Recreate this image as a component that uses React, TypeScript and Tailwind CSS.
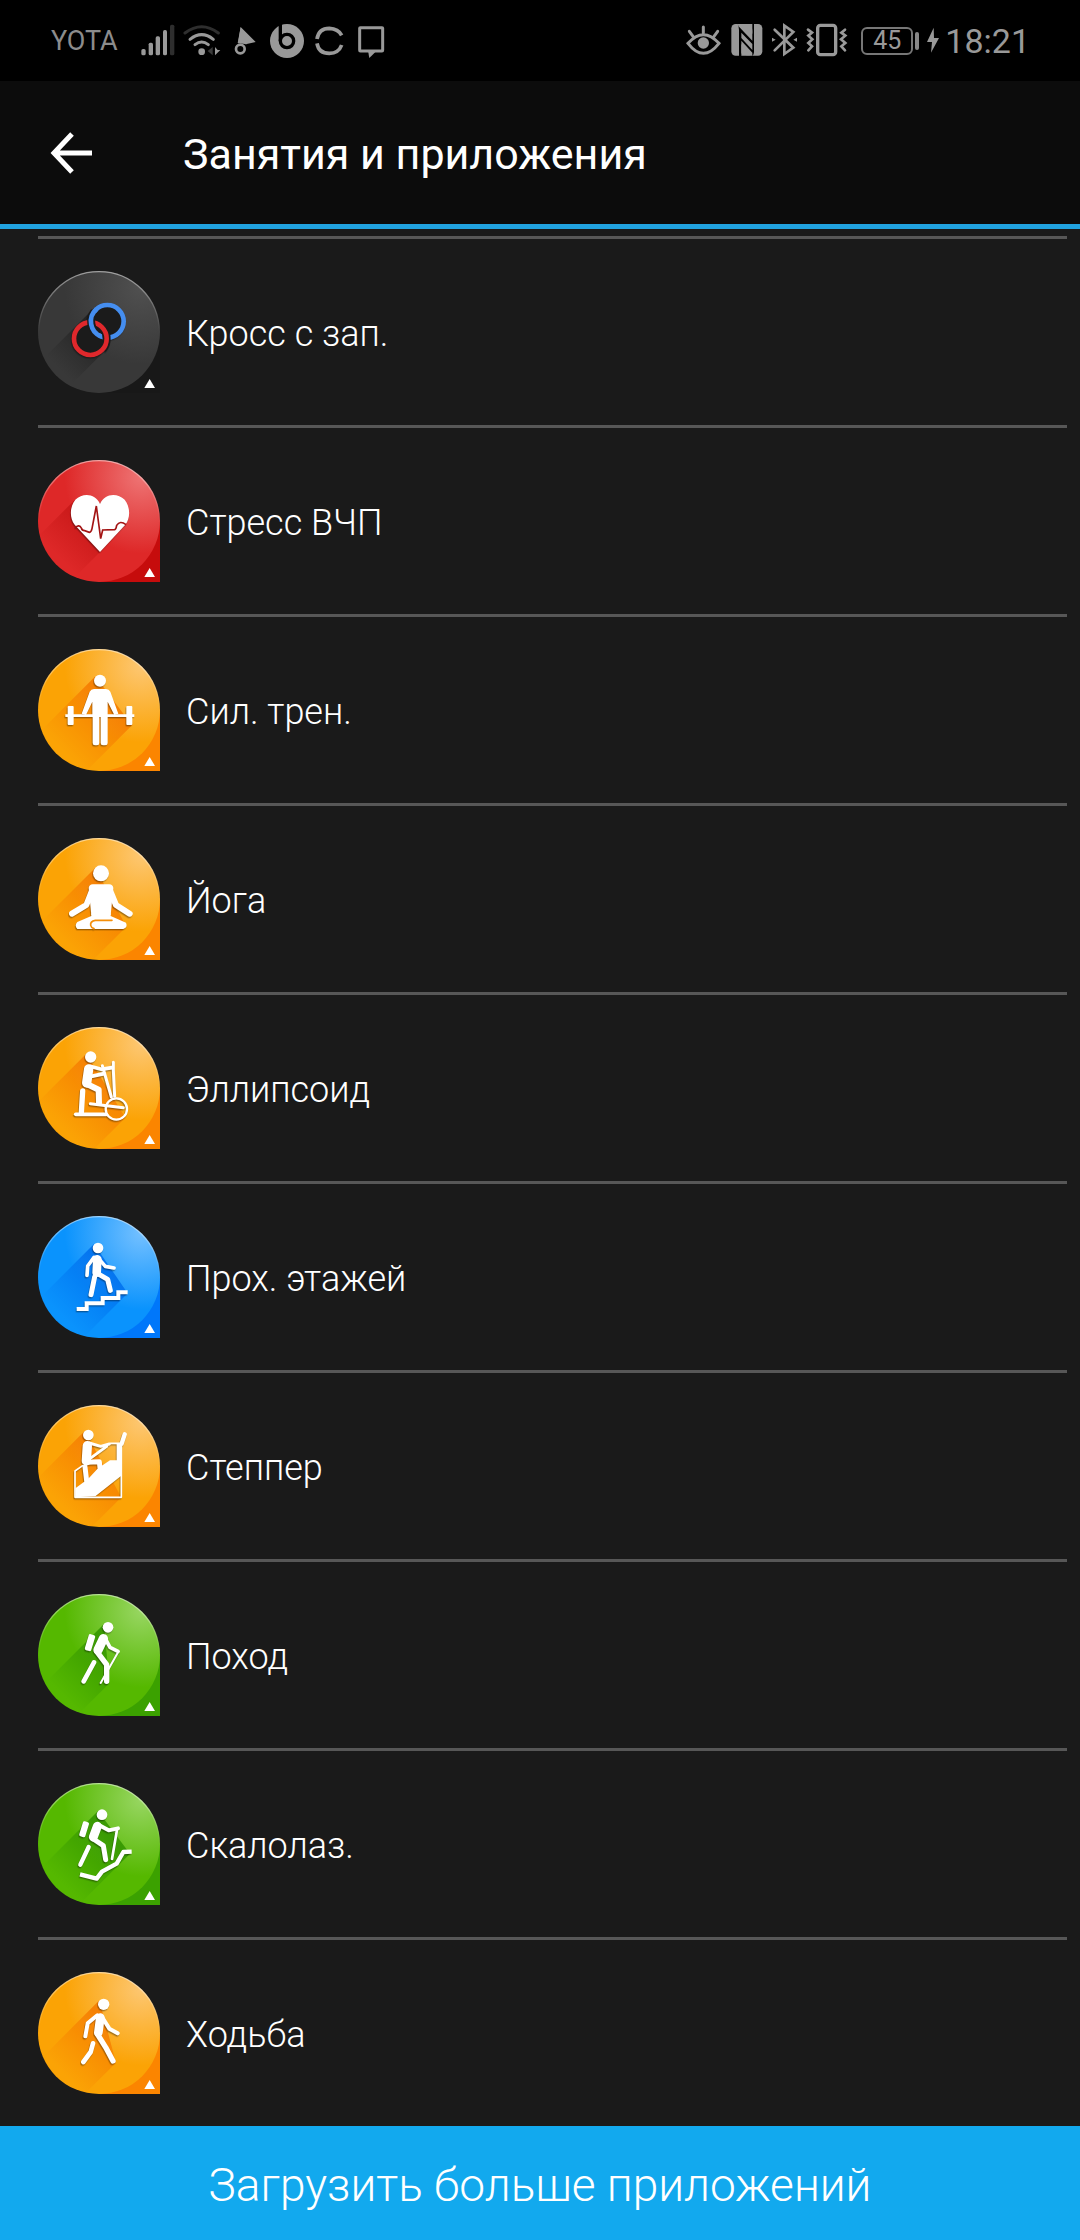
import type { ReactNode } from "react";

type Tone = { base: string; light: string; corner: string; shade: string };

const tones: Record<string, Tone> = {
  dark: { base: "#383838", light: "#505050", corner: "#181818", shade: "#1c1c1c" },
  red: { base: "#de2828", light: "#ee7474", corner: "#c60c0c", shade: "#bd1010" },
  orange: { base: "#fba305", light: "#fdc772", corner: "#fb8500", shade: "#f57c00" },
  blue: { base: "#0a93fd", light: "#74c0ff", corner: "#0077fa", shade: "#0070ee" },
  green: { base: "#55b800", light: "#98d662", corner: "#3ba100", shade: "#349600" },
};

type Activity = {
  id: string;
  name: string;
  tone: keyof typeof tones;
  // the two outer points of the glyph that the long shadow starts from
  shadow: [number, number, number, number];
  glyph: ReactNode;
};

const activities: Activity[] = [
  {
    id: "cross",
    name: "Кросс с зап.",
    tone: "dark",
    shadow: [168, 111, 197, 243],
    glyph: (
      <g fill="none">
        <circle cx="208" cy="151" r="49" fill="#1b1b1b" />
        <circle cx="157" cy="203" r="49" fill="#1b1b1b" />
        <circle cx="208" cy="151" r="49" stroke="#458ef0" strokeWidth="14" />
        <circle cx="157" cy="203" r="49" stroke="#1b1b1b" strokeWidth="24" strokeDasharray="64 244" transform="rotate(-35 157 203)" />
        <circle cx="157" cy="203" r="49" stroke="#e0282c" strokeWidth="14" />
        <path d="M169 122A49 49 0 0 0 180 191" stroke="#1b1b1b" strokeWidth="24" />
        <path d="M176 114A49 49 0 0 0 190 197" stroke="#458ef0" strokeWidth="14" />
      </g>
    ),
  },
  {
    id: "stress",
    name: "Стресс ВЧП",
    tone: "red",
    shadow: [110, 120, 186, 276],
    glyph: (
      <>
        <path d="M186 276L110 194C94 174 95 140 112 119C134 98 172 99 186 132C200 99 238 98 260 119C277 140 278 174 262 194Z" fill="#fff" />
        <path
          d="M112 202C120 196 126 196 130 204Q132 212 140 212L154 217Q160 216 162 206L175 138L188 236L194 210L230 209Q234 208 236 196Q246 180 264 194"
          fill="none"
          stroke="#a31414"
          strokeWidth="5"
        />
      </>
    ),
  },
  {
    id: "strength",
    name: "Сил. трен.",
    tone: "orange",
    shadow: [172, 82, 282, 229],
    glyph: (
      <g fill="#fff">
        <circle cx="186" cy="95" r="18" />
        <path d="M168 120H204Q213 120 217 128L241 194L229 198L209 158V202H163V158L144 198L131 194L155 128Q159 120 168 120Z" />
        <path d="M82 196H289V204H82Z" />
        <rect x="89" y="171" width="18" height="57" rx="3" />
        <rect x="265" y="171" width="18" height="57" rx="3" />
        <rect x="164" y="196" width="20" height="93" rx="7" />
        <rect x="188" y="196" width="21" height="93" rx="7" />
      </g>
    ),
  },
  {
    id: "yoga",
    name: "Йога",
    tone: "orange",
    shadow: [172, 89, 265, 266],
    glyph: (
      <g strokeLinecap="round" strokeLinejoin="round" fill="none">
        <circle cx="189" cy="106" r="24" fill="#fff" />
        <path d="M164 139H214Q224 139 226 150L218 232H160L152 150Q154 139 164 139Z" fill="#fff" />
        <path d="M165 150L145 201L102 227M213 150L234 201L275 227" stroke="#fff" strokeWidth="18" />
        <path d="M160 226V234L118 252Q108 262 118 273H256Q270 268 264 254L218 234V226Z" fill="#fff" />
        <path d="M222 247H172Q156 250 158 262Q160 270 168 272" stroke="#f58f0a" strokeWidth="5" />
      </g>
    ),
  },
  {
    id: "elliptical",
    name: "Эллипсоид",
    tone: "orange",
    shadow: [145, 80, 262, 272],
    glyph: (
      <g stroke="#fff" strokeLinecap="round" strokeLinejoin="round" fill="none">
        <circle cx="158" cy="90" r="17" fill="#fff" stroke="none" />
        <path d="M152 126L146 168" strokeWidth="28" />
        <path d="M156 118L190 127L222 122M160 148L198 140" strokeWidth="11" />
        <path d="M148 172L182 188L183 228" strokeWidth="18" />
        <path d="M134 192L130 258" strokeWidth="16" />
        <path d="M157 230L256 242M226 106V130L230 208M193 116L220 210" strokeWidth="9" />
        <path d="M113 262H205" strokeWidth="11" />
        <circle cx="235" cy="246" r="32" strokeWidth="7" />
      </g>
    ),
  },
  {
    id: "stairs",
    name: "Прох. этажей",
    tone: "blue",
    shadow: [168, 84, 269, 232],
    glyph: (
      <g stroke="#fff" strokeLinecap="round" strokeLinejoin="round" fill="none">
        <circle cx="180" cy="96" r="16" fill="#fff" stroke="none" />
        <path d="M178 130L176 170" strokeWidth="26" />
        <path d="M168 124L149 150L147 178M184 130L202 151L228 156" strokeWidth="11" />
        <path d="M170 182L159 236M178 172L209 190L217 223" strokeWidth="15" />
        <path d="M116 279H146V262H194V246H241V229H269" strokeWidth="12" strokeLinecap="butt" strokeLinejoin="miter" />
      </g>
    ),
  },
  {
    id: "stepper",
    name: "Степпер",
    tone: "orange",
    shadow: [140, 78, 250, 277],
    glyph: (
      <g stroke="#fff" strokeLinecap="round" strokeLinejoin="round" fill="none">
        <circle cx="151" cy="90" r="16" fill="#fff" stroke="none" />
        <path d="M148 122L145 168" strokeWidth="28" />
        <path d="M154 114L188 124L214 117M160 158L206 124" strokeWidth="9" />
        <path d="M146 172L184 170L186 188" strokeWidth="15" />
        <path d="M141 186L146 228" strokeWidth="15" />
        <path d="M134 182L111 198V277H250V115H218" strokeWidth="5" />
        <path d="M251 116L260 88" strokeWidth="13" />
        <path d="M112 250L150 222L180 190L216 166H236V115H250V212L172 274L112 277Z" fill="#fff" stroke="none" />
      </g>
    ),
  },
  {
    id: "hike",
    name: "Поход",
    tone: "green",
    shadow: [198, 90, 214, 268],
    glyph: (
      <g stroke="#fff" strokeLinecap="round" strokeLinejoin="round" fill="none">
        <circle cx="210" cy="100" r="16" fill="#fff" stroke="none" />
        <rect x="146" y="121" width="20" height="50" rx="5" fill="#fff" stroke="none" transform="rotate(17 156 146)" />
        <path d="M196 134L180 168" strokeWidth="28" />
        <path d="M204 138L216 160L240 172" strokeWidth="11" />
        <path d="M168 205L137 262" strokeWidth="14" />
        <path d="M176 172L206 212V262" strokeWidth="16" />
        <path d="M241 173L188 267" strokeWidth="6" />
      </g>
    ),
  },
  {
    id: "climb",
    name: "Скалолаз.",
    tone: "green",
    shadow: [180, 84, 276, 212],
    glyph: (
      <g stroke="#fff" strokeLinecap="round" strokeLinejoin="round" fill="none">
        <circle cx="192" cy="95" r="16" fill="#fff" stroke="none" />
        <rect x="129" y="115" width="19" height="47" rx="5" fill="#fff" stroke="none" transform="rotate(17 138 138)" />
        <path d="M178 130L166 162" strokeWidth="27" />
        <path d="M184 127L212 142L240 136" strokeWidth="12" />
        <path d="M152 192L127 245" strokeWidth="13" />
        <path d="M166 168L196 188L203 230" strokeWidth="15" />
        <path d="M237 140L222 228" strokeWidth="8" />
        <path d="M126 274L176 287L192 266L236 242L256 207L281 206" strokeWidth="13" strokeLinecap="butt" />
      </g>
    ),
  },
  {
    id: "walk",
    name: "Ходьба",
    tone: "orange",
    shadow: [184, 85, 234, 272],
    glyph: (
      <g stroke="#fff" strokeLinecap="round" strokeLinejoin="round" fill="none">
        <circle cx="197" cy="97" r="17" fill="#fff" stroke="none" />
        <path d="M187 137L181 182" strokeWidth="26" />
        <path d="M178 130L149 154L142 193M194 138L214 170L239 184" strokeWidth="12" />
        <path d="M165 214L158 240L136 270" strokeWidth="14" />
        <path d="M178 186L203 226L225 267" strokeWidth="16" />
      </g>
    ),
  },
];

const Badge = ({ activity }: { activity: Activity }) => {
  const { id, glyph, shadow } = activity;
  const tone = tones[activity.tone];
  const [ax, ay, bx, by] = shadow;
  return (
    <svg viewBox="0 0 366 366" className="size-[122px] shrink-0" aria-hidden="true">
      <defs>
        <radialGradient id={`${id}-fill`} gradientUnits="userSpaceOnUse" cx="310" cy="50" r="230">
          <stop offset="0" stopColor={tone.light} />
          <stop offset="1" stopColor={tone.base} />
        </radialGradient>
        <linearGradient id={`${id}-shade`} gradientUnits="userSpaceOnUse" x1="210" y1="160" x2="70" y2="300">
          <stop offset="0" stopColor={tone.shade} stopOpacity="0.9" />
          <stop offset="1" stopColor={tone.shade} stopOpacity="0" />
        </linearGradient>
        <linearGradient id={`${id}-rim`} x1="0" y1="0" x2="0" y2="1">
          <stop offset="0" stopColor="#fff" stopOpacity="0.5" />
          <stop offset="0.5" stopColor="#fff" stopOpacity="0" />
        </linearGradient>
        <clipPath id={`${id}-clip`}>
          <circle cx="183" cy="183" r="183" />
        </clipPath>
      </defs>
      <path d="M183 183H366V366H183Z" fill={tone.corner} />
      <circle cx="183" cy="183" r="183" fill={`url(#${id}-fill)`} />
      <polygon
        points={`${ax},${ay} ${bx},${by} ${bx - 250},${by + 250} ${ax - 250},${ay + 250}`}
        fill={`url(#${id}-shade)`}
        clipPath={`url(#${id}-clip)`}
      />
      <circle cx="183" cy="183" r="181" fill="none" stroke={`url(#${id}-rim)`} strokeWidth="4" />
      <g className="drop-shadow-[-2px_4px_2px_rgba(0,0,0,0.35)]">{glyph}</g>
      <path d="M319 351L335 324L351 351Z" fill="#fff" />
    </svg>
  );
};

const StatusBar = () => (
  <div className="flex h-[81px] items-center justify-between bg-black pr-[54px] pl-[51px] text-[#999]">
    <div className="flex items-center">
      <span className="w-[89px] pt-[2px] text-[27px] text-[#8c8c8c]">YOTA</span>
      <svg viewBox="330 66 108 111" className="mr-[6px] h-[37px] w-[36px]" fill="currentColor">
        <rect x="334" y="147" width="13" height="19" rx="5" />
        <rect x="356" y="128" width="13" height="38" rx="5" />
        <rect x="377" y="109" width="13" height="57" rx="5" />
        <rect x="399" y="90" width="12" height="76" rx="5" />
        <rect x="420" y="74" width="13" height="92" rx="5" fill="#2e2e2e" />
      </svg>
      <svg viewBox="456 66 120 111" className="mr-[10px] h-[37px] w-[40px]" fill="none" strokeWidth="9" strokeLinecap="round">
        <path d="M465 99Q515 61 565 99" stroke="#2e2e2e" />
        <path d="M480 118Q515 90 550 118M495 134Q515 118 535 134" stroke="currentColor" />
        <circle cx="515" cy="155" r="10" fill="currentColor" />
        <path d="M548 141V166L533 153Z" fill="#3a3a3a" />
        <path d="M555 141V166L571 150L563 150Z" fill="currentColor" />
      </svg>
      <svg viewBox="606 66 78 111" className="mr-[10px] h-[37px] w-[26px]">
        <path d="M632 81L677 126L647 133Q640 125 624 130Z" fill="currentColor" />
        <path d="M623 129L632 81L650 133Z" fill="currentColor" />
        <circle cx="631" cy="147" r="13" fill="#000" stroke="currentColor" strokeWidth="8" />
      </svg>
      <svg viewBox="714 66 114 111" className="mr-[6px] h-[37px] w-[38px]" fill="none">
        <circle cx="771" cy="123" r="51" fill="currentColor" />
        <path d="M751 72V123" stroke="#000" strokeWidth="10" />
        <circle cx="771" cy="123" r="20" stroke="#000" strokeWidth="10" />
      </svg>
      <svg viewBox="846 66 102 111" className="mr-[8px] h-[37px] w-[34px]" fill="none" stroke="currentColor" strokeWidth="11">
        <path d="M861 117Q866 85 898 85Q925 86 935 106M861 130Q866 160 898 160Q926 160 935 135" />
      </svg>
      <svg viewBox="972 66 102 111" className="h-[37px] w-[34px]">
        <rect x="989" y="83" width="69" height="70" rx="2" fill="none" stroke="currentColor" strokeWidth="9" />
        <path d="M1014 152H1040L1018 174Z" fill="currentColor" />
      </svg>
    </div>
    <div className="flex items-center">
      <svg viewBox="42 66 117 111" className="mr-[7px] h-[37px] w-[39px]" fill="none" stroke="currentColor" strokeWidth="9" strokeLinecap="round">
        <path d="M54 130Q100 78 147 130Q100 190 54 130ZM100 81V98M58 94L69 109M143 94L132 109" />
        <circle cx="100" cy="129" r="17" fill="currentColor" stroke="none" />
      </svg>
      <svg viewBox="180 66 102 111" className="mr-[6px] h-[37px] w-[34px]">
        <rect x="184" y="72" width="93" height="95" rx="13" fill="currentColor" />
        <path d="M202 70Q206 76 207 90V168H214V122L247 158V168Q253 164 252 148V70H247V122L207 80Z" fill="#000" />
        <path d="M210 73Q220 76 228 82L247 101V92Q246 78 240 73ZM214 98L247 132V150L214 114ZM214 132V160Q220 166 240 166Z" fill="currentColor" />
      </svg>
      <svg viewBox="300 66 87 111" className="mr-[6px] h-[37px] w-[29px]" fill="none" stroke="currentColor" strokeWidth="8">
        <path d="M314 89L370 143L343 162V77L370 96L314 151" strokeLinecap="round" />
        <path d="M306 113L317 119L306 125ZM381 113L370 119L381 125Z" fill="currentColor" stroke="none" />
      </svg>
      <svg viewBox="405 66 129 111" className="mr-[13px] h-[37px] w-[43px]" fill="none" stroke="currentColor">
        <rect x="443" y="76" width="54" height="88" rx="8" strokeWidth="10" />
        <path d="M414 89L426 98L415 107L427 118L415 129L426 139L415 151M525 89L514 98L526 107L513 118L526 129L514 139L525 151" strokeWidth="8" strokeLinecap="round" />
      </svg>
      <div className="flex h-[28px] w-[52px] items-center justify-center rounded-[6px] border-2 border-[#777] text-[25px] leading-none">45</div>
      <div className="mr-[6px] ml-[2px] h-[18px] w-[4px] rounded-full bg-[#888]" />
      <svg viewBox="762 66 48 111" className="mr-[4px] h-[37px] w-[16px]" fill="currentColor">
        <path d="M788 83L768 126H783L780 158L804 114H789Z" />
      </svg>
      <span className="-mr-1 text-[34px] leading-none">18:21</span>
    </div>
  </div>
);

const App = () => (
  <div className="flex min-h-screen flex-col bg-[#1a1a1a] font-['Roboto','Noto_Sans',sans-serif] text-white">
    <StatusBar />
    <header className="flex h-[148px] items-center border-b-[5px] border-[#21a3e0] bg-[#0c0c0c]">
      <button aria-label="Назад" className="ml-12 flex h-16 w-[135px] items-center">
        <svg viewBox="0 0 48 48" className="size-12" fill="none" stroke="currentColor" strokeWidth="5">
          <path d="M24 5L6 24L24 43M5 24H44" />
        </svg>
      </button>
      <h1 className="pt-[3px] text-[43px] leading-none">Занятия и приложения</h1>
    </header>
    <ul className="flex-1 pt-[7px] pr-[13px] pl-[38px]">
      {activities.map((activity) => (
        <li key={activity.id} className="border-t-[3px] border-[#575757]">
          <button className="flex w-full items-center gap-[26px] py-8 text-left">
            <Badge activity={activity} />
            <span className="pt-1 text-[36px] font-light">{activity.name}</span>
          </button>
        </li>
      ))}
    </ul>
    <button className="h-[114px] w-full bg-[#12a9ee] pt-1 text-[46px] font-light">Загрузить больше приложений</button>
  </div>
);

export default App;
